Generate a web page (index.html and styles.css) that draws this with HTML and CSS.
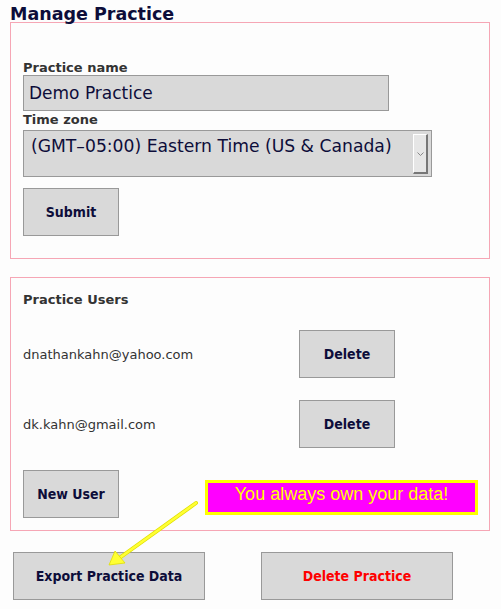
FILE: index.html
```html
<!DOCTYPE html>
<html lang="en">
<head>
    <meta charset="UTF-8">
    <meta name="viewport" content="width=device-width, initial-scale=1.0">
    <title>Manage Practice</title>
    <link rel="stylesheet" href="styles.css">
</head>
<body>
    <div class="page">
        <h1>Manage Practice</h1>

        <!-- Practice settings -->
        <form class="panel settings">
            <label class="field-label" for="practiceName">Practice name</label>
            <input class="text-input" id="practiceName" type="text" value="Demo Practice">
            <label class="field-label">Time zone</label>
            <div class="select-box">
                <span class="select-text">(GMT&#8211;05:00) Eastern Time (US &amp; Canada)</span>
                <span class="select-arrow">
                    <svg width="7" height="4" viewBox="0 0 7 4"><path d="M0.5 0.5 L3.5 3.5 L6.5 0.5" fill="none" stroke="#888" stroke-width="1"/></svg>
                </span>
            </div>
            <button type="button" class="btn submit-btn">Submit</button>
        </form>

        <!-- Users of the practice -->
        <div class="panel users">
            <h3 class="panel-title">Practice Users</h3>
            <div class="user-row">
                <span class="user-email">dnathankahn@yahoo.com</span>
                <button class="btn">Delete</button>
            </div>
            <div class="user-row">
                <span class="user-email">dk.kahn@gmail.com</span>
                <button class="btn">Delete</button>
            </div>
            <button class="btn new-user-btn">New User</button>
        </div>

        <div class="actions">
            <button class="btn wide-btn">Export Practice Data</button>
            <button class="btn wide-btn danger">Delete Practice</button>
        </div>

        <!-- Annotation callout -->
        <div class="callout">You always own your data!</div>
        <svg class="callout-arrow" width="100" height="70" viewBox="0 0 100 70">
            <line x1="96" y1="7" x2="18" y2="63" stroke="#e0e000" stroke-width="4" stroke-linecap="round"/>
            <line x1="96" y1="7" x2="18" y2="63" stroke="#ffff33" stroke-width="2.5" stroke-linecap="round"/>
            <polygon points="9,69 15,55 25,67" fill="#ffff33" stroke="#e0e000" stroke-width="0.8"/>
        </svg>
    </div>
</body>
</html>
```

FILE: styles.css
```css
/* Global Styles */
body {
    margin: 0;
    background: #fdfdfd;
    font-family: "DejaVu Sans", sans-serif;
    color: #333;
}

.page {
    position: relative;
    padding: 0 10px;
    width: 480px;
}

h1 {
    margin: 6px 0 0;
    font-size: 17.5px;
    line-height: 16px;
    color: #0d0d3a;
}

/* Panels */
.panel {
    box-sizing: border-box;
    width: 480px;
    border: 1px solid #f6a6b5;
    padding: 0 12px;
    margin: 0;
}

.settings {
    padding-top: 37px;
    padding-bottom: 22px;
}

.field-label {
    display: block;
    font-size: 13px;
    font-weight: bold;
    line-height: 15px;
}

.text-input {
    display: block;
    box-sizing: border-box;
    width: 366px;
    height: 36px;
    margin: 0 0 1px;
    padding: 0 5px;
    border: 1px solid #999;
    background: #d9d9d9;
    font-family: inherit;
    font-size: 17px;
    color: #0d0d3a;
}

.select-box {
    display: flex;
    box-sizing: border-box;
    width: 409px;
    height: 47px;
    margin-top: 3px;
    padding: 5px 3px 0 7px;
    border: 1px solid #999;
    background: #d9d9d9;
}

.select-text {
    flex: 1;
    font-size: 17.2px;
    line-height: 21px;
    color: #0d0d3a;
}

.select-arrow {
    display: flex;
    align-items: center;
    justify-content: center;
    box-sizing: border-box;
    width: 15px;
    height: 40px;
    margin-top: -2px;
    background: #e6e6e6;
    border-top: 1px solid #fff;
    border-left: 1px solid #fff;
    border-right: 2px solid #777;
    border-bottom: 2px solid #777;
}

/* Buttons */
.btn {
    box-sizing: border-box;
    width: 96px;
    height: 48px;
    padding: 0;
    border: 1px solid #999;
    background: #d9d9d9;
    font-family: "DejaVu Sans Condensed", "DejaVu Sans", sans-serif;
    font-size: 14px;
    font-weight: bold;
    color: #0d0d3a;
}

.submit-btn {
    display: block;
    margin-top: 11px;
}

/* Users */
.users {
    margin-top: 18px;
    padding-top: 14px;
    padding-bottom: 12px;
}

.panel-title {
    margin: 0 0 23px;
    font-size: 13px;
    line-height: 15px;
}

.user-row {
    display: flex;
    align-items: center;
    margin-bottom: 22px;
}

.user-email {
    width: 276px;
    font-size: 13px;
}

.new-user-btn {
    display: block;
}

/* Bottom actions */
.actions {
    display: flex;
    gap: 56px;
    margin: 21px 0 0 3px;
}

.wide-btn {
    width: 192px;
}

.danger {
    color: #f00;
}

/* Callout annotation */
.callout {
    position: absolute;
    left: 205px;
    top: 474px;
    box-sizing: border-box;
    width: 273px;
    height: 35px;
    padding-top: 1px;
    border: 3px solid #ffff00;
    background: #ff00ff;
    color: #ffff00;
    font-family: "Liberation Sans", Arial, sans-serif;
    font-size: 18px;
    text-align: center;
}

.callout-arrow {
    position: absolute;
    left: 100px;
    top: 490px;
}
```
